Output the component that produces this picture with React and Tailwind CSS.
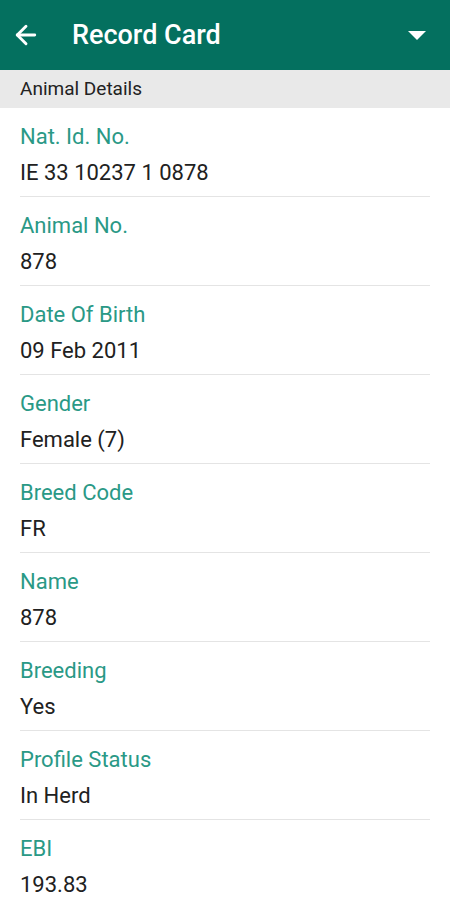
import { ArrowLeft } from "lucide-react"

const fields = [
  { label: "Nat. Id. No.", value: "IE 33 10237 1 0878" },
  { label: "Animal No.", value: "878" },
  { label: "Date Of Birth", value: "09 Feb 2011" },
  { label: "Gender", value: "Female (7)" },
  { label: "Breed Code", value: "FR" },
  { label: "Name", value: "878" },
  { label: "Breeding", value: "Yes" },
  { label: "Profile Status", value: "In Herd" },
  { label: "EBI", value: "193.83" },
]

const App = () => {
  return (
    <div className="w-[450px] h-[900px] overflow-hidden bg-white font-['Roboto',sans-serif]">
      {/* App bar */}
      <div className="h-[70px] bg-[#04705f] flex items-center pl-[11px] pr-[24px] text-white">
        <ArrowLeft size={30} strokeWidth={2.3} />
        <h1 className="ml-[31px] text-[27px] font-medium leading-none">Record Card</h1>
        <div className="ml-auto w-0 h-0 border-l-[9px] border-r-[9px] border-t-[9px] border-l-transparent border-r-transparent border-t-white" />
      </div>

      {/* Section header */}
      <div className="h-[38px] bg-[#e9e9e9] flex items-center px-[20px]">
        <span className="text-[19px] text-[#222]">Animal Details</span>
      </div>

      {/* Fields */}
      <div className="px-[20px]">
        {fields.map((f, i) => (
          <div key={i} className="border-b border-[#e4e4e4] pt-[16px] pb-[10px]">
            <p className="text-[22px] leading-[26px] text-[#2a9986]">{f.label}</p>
            <p className="mt-[10px] text-[22px] leading-[26px] text-[#212121]">{f.value}</p>
          </div>
        ))}
      </div>
    </div>
  )
}

export default App
